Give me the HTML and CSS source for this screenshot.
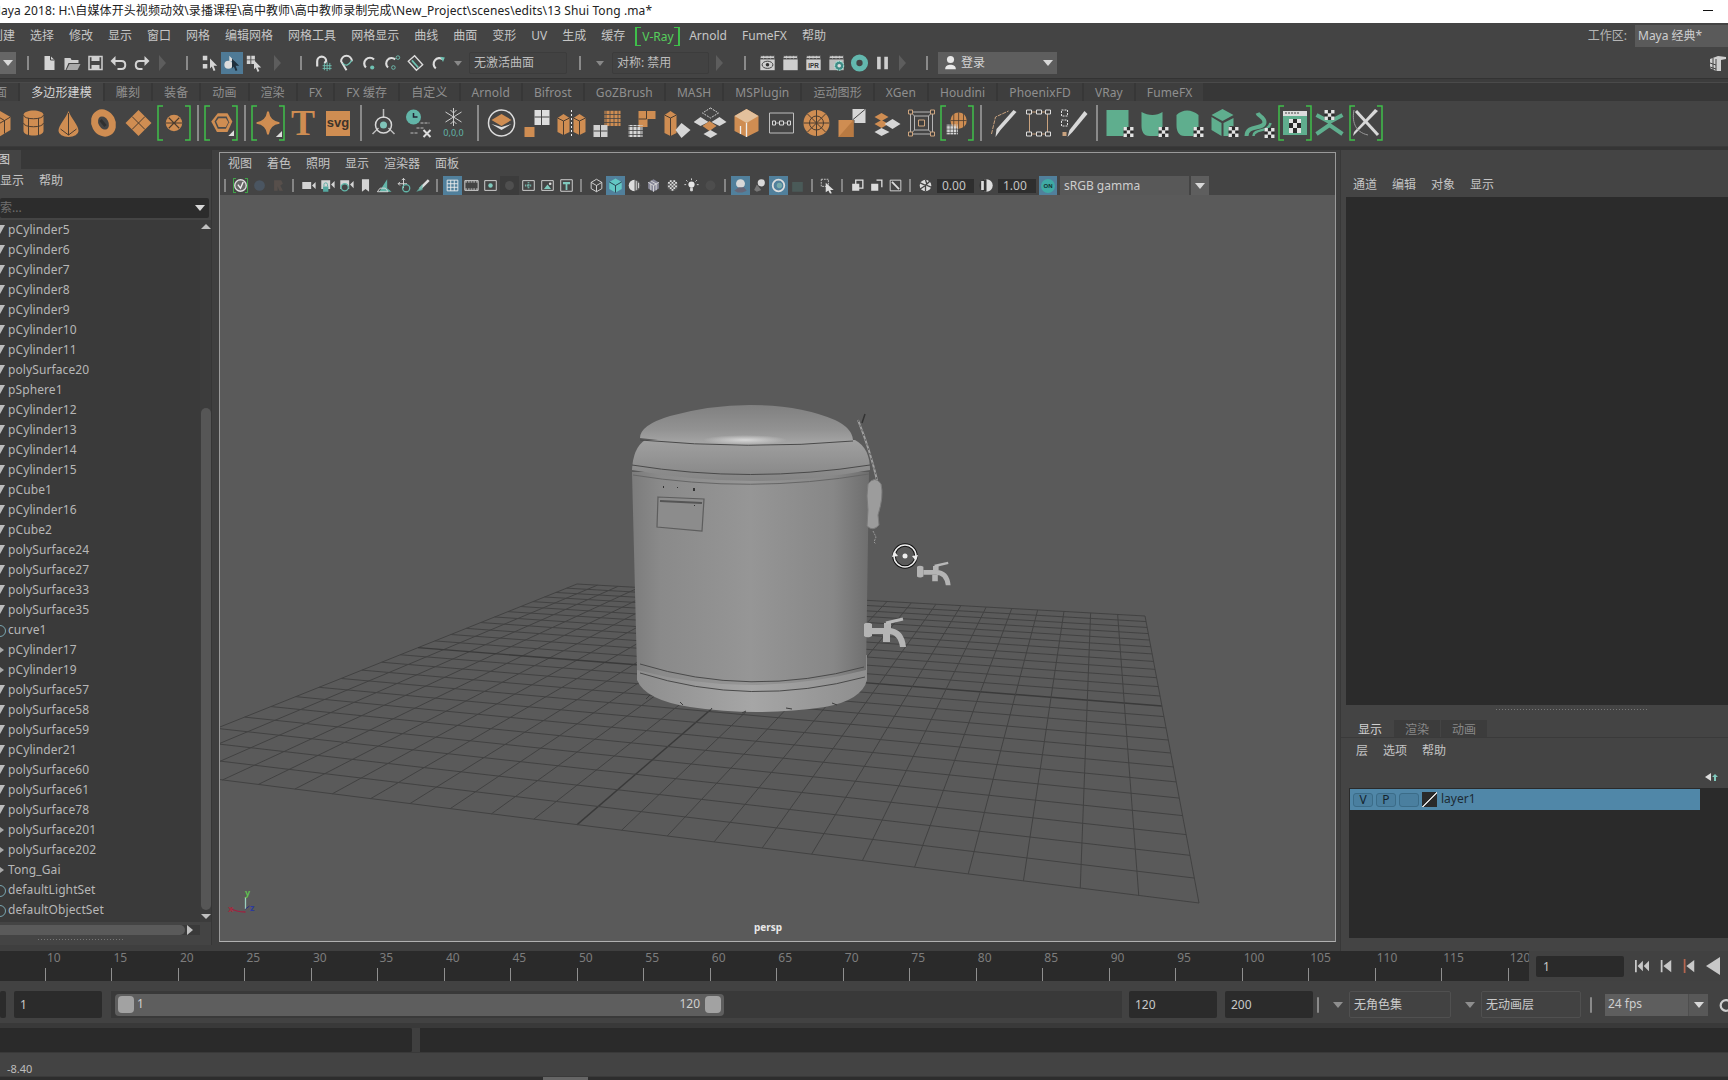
FILE: index.html
```html
<!DOCTYPE html>
<html lang="zh-CN">
<head>
<meta charset="utf-8">
<title>Maya 2018</title>
<link rel="stylesheet" href="styles.css">
</head>
<body>
<svg class="sprite" aria-hidden="true">
<defs>
<g id="br"><path d="M7 1H2v34h5M29 1h5v34h-5" fill="none" stroke="#3fbf4a" stroke-width="1.5"/></g>
<g id="chk"><rect width="10" height="10" fill="#2b2b2b"/><path d="M0 0h3.4v3.4H0zM6.6 0H10v3.4H6.6zM3.3 3.3h3.4v3.4H3.3zM0 6.6h3.4V10H0zM6.6 6.6H10V10H6.6z" fill="#e4e4e4"/></g>
<symbol id="s-cube" viewBox="0 0 32 32"><path d="M16 3l12 7v13l-12 7-12-7V10z" fill="#cf8d52"/><path d="M4 10l12 7 12-7M16 17v13M10 6.500l12 7M10 13.500v13M22 13.500v13" fill="none" stroke="#4a3c30"/></symbol>
<symbol id="s-cyl" viewBox="0 0 32 32"><path d="M6 8c0-6 20-6 20 0v16c0 6-20 6-20 0z" fill="#cf8d52"/><path d="M6 8c0 5 20 5 20 0M6 16c0 5 20 5 20 0M11 11v17M21 11v17" fill="none" stroke="#4a3c30"/></symbol>
<symbol id="s-cone" viewBox="0 0 32 32"><path d="M16 4c3 8 10 14 10 20a10 6 0 0 1-20 0C6 18 13 12 16 4z" fill="#cf8d52"/><path d="M16 6v22M8 22l8 6 8-6" fill="none" stroke="#4a3c30"/></symbol>
<symbol id="s-tor" viewBox="0 0 32 32"><ellipse cx="16" cy="16" rx="8.500" ry="10.500" transform="rotate(-28 16 16)" fill="none" stroke="#cf8d52" stroke-width="7"/><path d="M13 13l5 6" stroke="#2f2f2f" stroke-width="3"/></symbol>
<symbol id="s-plane" viewBox="0 0 32 32"><path d="M16 3l13 13-13 13L3 16z" fill="#cf8d52"/><path d="M9.500 9.500l13 13M22.500 9.500l-13 13" stroke="#4a3c30"/></symbol>
<symbol id="s-ball" viewBox="0 0 32 32"><circle cx="16" cy="16" r="11" fill="#cf8d52"/><path d="M5 16h22M9 9l14 14M23 9L9 23" stroke="#4a3c30" stroke-width="1.500"/></symbol>
<symbol id="s-plat" viewBox="0 0 32 32"><path d="M12 4h12l6 10-6 13H11L4 14z" fill="#cf8d52"/><path d="M12 8h11l3 7-4 8H12l-4-9z" fill="#4b4b4b"/><path d="M13 10h9l3 5-3 6h-9l-3-7z" fill="#cf8d52"/><path d="M32 32V25l-7 7z" fill="#ddd"/></symbol>
<symbol id="s-star" viewBox="0 0 32 32"><path d="M16 3c1 8 5 12 13 13-8 1-12 5-13 13-1-8-5-12-13-13 8-1 12-5 13-13z" fill="#cf8d52" stroke="#cf8d52" stroke-width="2"/><path d="M32 32V25l-7 7z" fill="#ddd"/></symbol>
<symbol id="s-joint" viewBox="0 0 32 32"><path d="M16 2v9M5 27l6-6M27 27l-6-6" stroke="#bbb" stroke-width="1.500"/><circle cx="16" cy="18" r="8" fill="none" stroke="#d8d8d8" stroke-width="1.500"/><circle cx="16" cy="18" r="3.500" fill="#7fc3b8"/></symbol>
<symbol id="s-clock" viewBox="0 0 32 32"><circle cx="11" cy="10" r="7.500" fill="#62b5a8"/><path d="M11 6v4h4" fill="none" stroke="#223" stroke-width="1.500"/><path d="M18 16h9M14 21h8M8 26h8" stroke="#bbb" stroke-dasharray="3 1"/><path d="M21 23l7 7M28 23l-7 7" stroke="#ddd" stroke-width="2"/></symbol>
<symbol id="s-snow" viewBox="0 0 32 32"><path d="M16 1v18M8 5l16 10M24 5L8 15M13 3l3 3 3-3M13 17l3-3 3 3" fill="none" stroke="#ccc"/><text x="16" y="29" text-anchor="middle" class="svgt" fill="#62b5a8">0,0,0</text></symbol>
<symbol id="s-comb" viewBox="0 0 32 32"><circle cx="16" cy="16" r="13" fill="none" stroke="#ddd" stroke-width="1.500"/><path d="M16 7l10 6-10 6-10-6z" fill="#cf8d52"/><path d="M6 17l10 6 10-6-10 3z" fill="#ddd"/></symbol>
<symbol id="s-sep" viewBox="0 0 32 32"><path d="M14 3h15v15H14z" fill="#ddd"/><path d="M21 3v15M14 10h15" stroke="#444"/><path d="M4 20h10v10H4z" fill="#cf8d52"/></symbol>
<symbol id="s-mir" viewBox="0 0 32 32"><path d="M2 11l6-4 6 4v14l-6 3-6-3zM18 11l6-4 6 4v14l-6 3-6-3z" fill="#cf8d52"/><path d="M2 11l6 3 6-3M18 11l6 3 6-3M8 14v14M24 14v14" fill="none" stroke="#4a3c30"/><path d="M16 3v27" stroke="#eee" stroke-dasharray="2 2"/></symbol>
<pattern id="gw" width="4" height="4" patternUnits="userSpaceOnUse"><rect width="3.200" height="3.200" fill="#d6d6d6"/></pattern>
<pattern id="go" width="4" height="4" patternUnits="userSpaceOnUse"><rect width="3.200" height="3.200" fill="#cf8d52"/></pattern>
<symbol id="s-gridA" viewBox="0 0 32 32"><rect x="14" y="3" width="16" height="16" fill="url(#go)"/><rect x="3" y="18" width="14" height="12" fill="#d0d0d0"/><path d="M10 18v12M3 24h14" stroke="#444"/></symbol>
<symbol id="s-gridB" viewBox="0 0 32 32"><path d="M13 4h17v8h-8v8h-9z" fill="#cf8d52"/><path d="M21 4v8M13 12h8" stroke="#4a3c30"/><rect x="3" y="18" width="14" height="12" fill="url(#gw)"/></symbol>
<symbol id="s-ext" viewBox="0 0 32 32"><path d="M4 8l6-4 6 4v18l-6 3-6-3z" fill="#cf8d52"/><path d="M4 8l6 3 6-3M10 11v18" fill="none" stroke="#4a3c30"/><path d="M21 16l9 7-9 8-6-8z" fill="#d6d6d6"/></symbol>
<symbol id="s-stack" viewBox="0 0 32 32"><path d="M15 1l8 5-8 5-8-5z" fill="none" stroke="#ccc" stroke-dasharray="2 1"/><path d="M5 10l8 5-8 4-7-4zM24 10l7 5-7 4-8-4z" fill="#d6d6d6"/><path d="M14 14l7 5-7 5-7-5z" fill="#cf8d52"/><path d="M15 23l7 4-7 4-7-4z" fill="#d6d6d6"/></symbol>
<symbol id="s-bev" viewBox="0 0 32 32"><path d="M16 2l12 7v15l-12 6-12-6V9z" fill="#cf8d52"/><path d="M16 2l12 7-12 7L4 9z" fill="#e2c09c"/><path d="M16 16v14M10 19v8" stroke="#eee" stroke-width="1.300"/></symbol>
<symbol id="s-box" viewBox="0 0 32 32"><path d="M4 6h24v20H4z" fill="none" stroke="#bdbdbd"/><path d="M7 16h18" stroke="#bdbdbd"/><path d="M7 14h3v4H7zM14 14h4v4h-4zM22 14h3v4h-3z" fill="#444" stroke="#d8d8d8"/></symbol>
<symbol id="s-wheel" viewBox="0 0 32 32"><circle cx="16" cy="16" r="13" fill="#cf8d52"/><circle cx="16" cy="16" r="7" fill="none" stroke="#4a3c30"/><path d="M3 16h26M16 3v26M7 7l18 18M25 7L7 25" stroke="#4a3c30"/></symbol>
<symbol id="s-half" viewBox="0 0 32 32"><path d="M3 13h15v17H3z" fill="#cf8d52"/><path d="M3 30L18 13v17z" fill="#b97a42"/><path d="M17 2h13v14H19v-3h-2z" fill="#d6d6d6"/><path d="M17 13L30 2" stroke="#444"/></symbol>
<symbol id="s-dia" viewBox="0 0 32 32"><path d="M11 6l7 4-7 4-7-4zM11 13l7 4-7 4-7-4z" fill="#cf8d52"/><path d="M22 12l8 5-8 5-8-5zM11 21l8 4-8 4-7-4z" fill="#d6d6d6"/></symbol>
<symbol id="s-crn" viewBox="0 0 32 32"><path d="M5 5h22v22H5zM9 9h14v14H9zM5 5l4 4M27 5l-4 4M5 27l4-4M27 27l-4-4" fill="none" stroke="#b5b5b5"/><path d="M3 3h4v4H3zM25 3h4v4h-4zM3 25h4v4H3zM25 25h4v4h-4zM13 13h6v6h-6z" fill="#3d3d3d" stroke="#cfa67f"/></symbol>
<symbol id="s-sg" viewBox="0 0 32 32"><circle cx="18" cy="13" r="10" fill="#cf8d52"/><path d="M8 13h20M18 3v20M12 5v16M24 5v16" stroke="#4a3c30"/><rect x="3" y="18" width="14" height="12" fill="url(#gw)"/></symbol>
<symbol id="s-pen1" viewBox="0 0 32 32"><path d="M4 27L8 10l13-6" fill="none" stroke="#c9a27e" stroke-dasharray="4 1"/><path d="M29 5L13 23l-5 7 1-8L26 3z" fill="#d8d8d8"/></symbol>
<symbol id="s-pen2" viewBox="0 0 32 32"><path d="M7 5h18v22H7z" fill="none" stroke="#c9a27e"/><path d="M4 3h5v4H4zM14 3h5v4h-5zM23 3h5v4h-5zM4 25h5v4H4zM14 25h5v4h-5zM23 25h5v4h-5z" fill="#3e3e3e" stroke="#ddd"/></symbol>
<symbol id="s-pen3" viewBox="0 0 32 32"><path d="M4 3h6v6H4zM4 13h6v6H4z" fill="none" stroke="#ddd" stroke-dasharray="2 1"/><path d="M5 25h4v4H5z" fill="#c9a27e"/><path d="M30 7L15 25l-5 5 2-7L27 4z" fill="#d8d8d8"/></symbol>
<symbol id="s-g1" viewBox="0 0 32 32"><path d="M3 3h22v26H3z" fill="#5fae8e"/><use href="#chk" x="20" y="20" width="10" height="10"/></symbol>
<symbol id="s-g2" viewBox="0 0 32 32"><path d="M3 5c7 4 15 4 21 0v24H11c-6 0-8-5-8-10z" fill="#5fae8e"/><use href="#chk" x="20" y="20"/></symbol>
<symbol id="s-g3" viewBox="0 0 32 32"><path d="M3 8c6-6 15-6 22 0v21H11C5 29 3 24 3 18z" fill="#5fae8e"/><use href="#chk" x="20" y="20"/></symbol>
<symbol id="s-g4" viewBox="0 0 32 32"><path d="M14 2l11 6-11 6L3 8zM3 10l10 6v13L3 23z" fill="#5fae8e"/><path d="M15 16l10-5v8h-4v10h-6z" fill="#5fae8e"/><use href="#chk" x="20" y="20"/></symbol>
<symbol id="s-g5" viewBox="0 0 32 32"><path d="M3 29c0-12 18-6 18-14 0-5-6-6-7-9" fill="none" stroke="#5fae8e" stroke-width="4"/><path d="M10 29c0-8 15-3 17-13" fill="none" stroke="#5fae8e" stroke-width="2.500"/><use href="#chk" x="21" y="21"/></symbol>
<symbol id="s-g6" viewBox="0 0 36 36"><path d="M6 6h24v24H6z" fill="#5fae8e"/><path d="M6 6h24v5H6z" fill="#ddd"/><path d="M8 8h14" stroke="#444" stroke-dasharray="2 1"/><path d="M12 14h12v14H12z" fill="#2b2b2b"/><path d="M12 14h4v4h-4zM20 14h4v4h-4zM16 18h4v5h-4zM12 23h4v5h-4zM20 23h4v5h-4z" fill="#e4e4e4"/></symbol>
<symbol id="s-g7" viewBox="0 0 32 32"><path d="M2 8l13 7 13-7M2 27l13-9 13 9" fill="none" stroke="#5fae8e" stroke-width="4"/><use href="#chk" x="10" y="3"/></symbol>
<symbol id="s-xt" viewBox="0 0 36 36"><path d="M30 6L8 28l-3 3 1-4L27 4z" fill="#d8d8d8"/><path d="M8 6l22 24" stroke="#d8d8d8" stroke-width="3"/><path d="M6 5c-2 10 0 22 14 25" fill="none" stroke="#999"/></symbol>

<symbol id="t-new" viewBox="0 0 18 18"><path d="M4 2h6l4 4v10H4z" fill="#d4d4d4"/><path d="M10 2v4h4" fill="none" stroke="#444"/></symbol>
<symbol id="t-open" viewBox="0 0 18 18"><path d="M1 4h6l1 2h7v3H5l-3 7H1z" fill="#cfcfcf"/><path d="M6 10h11l-3 6H3z" fill="#a9a9a9"/></symbol>
<symbol id="t-save" viewBox="0 0 18 18"><path d="M2.500 2.500h13v13h-13z" fill="none" stroke="#cfcfcf" stroke-width="1.500"/><path d="M5 2h8v5H5zM5 11h8v4H5z" fill="#cfcfcf"/></symbol>
<symbol id="t-undo" viewBox="0 0 18 18"><path d="M5 7h7c5 0 5 8 0 8H8" fill="none" stroke="#d4d4d4" stroke-width="2"/><path d="M6 2v10L1 7z" fill="#d4d4d4"/></symbol>
<symbol id="t-redo" viewBox="0 0 18 18"><path d="M13 7H7c-5 0-5 8 0 8h3" fill="none" stroke="#d4d4d4" stroke-width="2"/><path d="M12 2v10l5-5z" fill="#d4d4d4"/></symbol>
<symbol id="t-s1" viewBox="0 0 20 20"><path d="M2 2h5v5H2zM2 11h5v5H2z" fill="#d4d4d4"/><path d="M10 5l8 8h-4l2 5-2 1-2-5-2 2z" fill="#d4d4d4"/></symbol>
<symbol id="t-s2" viewBox="0 0 20 20"><path d="M7 2l6 6-6 0z" fill="#ddd"/><circle cx="6" cy="12" r="4.500" fill="#ddd"/><path d="M10 5l8 8h-4l2 5-2 1-2-5-2 2z" fill="#1f2f3c"/></symbol>
<symbol id="t-s3" viewBox="0 0 20 20"><path d="M2 2h4v4H2zM7 2h4v4H7zM2 7h4v4H2zM7 7h4v4H7z" fill="#d4d4d4"/><path d="M10 7l8 8h-4l2 4-2 1-2-5-2 2z" fill="#d4d4d4"/></symbol>
<symbol id="t-m1" viewBox="0 0 20 20"><path d="M3 14V8a5 5 0 1 1 10 0l-2 2" fill="none" stroke="#ddd" stroke-width="2.400"/><path d="M9 13h10M14 9v10M11 10v8M17 10v8M9 16h10" stroke="#6fc2b3"/></symbol>
<symbol id="t-m2" viewBox="0 0 20 20"><path d="M10 18L4 8a5.500 5.500 0 1 1 12 0" fill="none" stroke="#ddd" stroke-width="2.200"/><path d="M6 10q4 6 10-3" fill="none" stroke="#6fc2b3" stroke-width="1.500"/></symbol>
<symbol id="t-m3" viewBox="0 0 20 20"><path d="M15 6A6 6 0 1 0 6 15" fill="none" stroke="#ddd" stroke-width="2.400"/><circle cx="13" cy="15" r="2.300" fill="#6fc2b3"/></symbol>
<symbol id="t-m4" viewBox="0 0 20 20"><path d="M13 6A6 6 0 1 0 5 15" fill="none" stroke="#ddd" stroke-width="2.400"/><circle cx="11" cy="15" r="2" fill="none" stroke="#6fc2b3"/><circle cx="16" cy="4" r="2" fill="none" stroke="#6fc2b3"/></symbol>
<symbol id="t-m5" viewBox="0 0 20 20"><path d="M2 8l7-6 9 10-7 6z" fill="none" stroke="#ddd" stroke-width="1.500"/><path d="M6 7l7 8" stroke="#6fc2b3" stroke-width="2"/></symbol>
<symbol id="t-m6" viewBox="0 0 20 20"><path d="M15 6A6 6 0 1 0 7 16" fill="none" stroke="#ddd" stroke-width="2.400"/><path d="M12 3l5 1-2 5z" fill="#6fc2b3"/></symbol>
<symbol id="t-r1" viewBox="0 0 20 20"><path d="M2 2h16v3H2z" fill="#ccc" stroke="#444" stroke-dasharray="3 1"/><path d="M2 6h16v12H2z" fill="#cfcfcf"/><ellipse cx="10" cy="12" rx="6" ry="4" fill="none" stroke="#333"/><circle cx="10" cy="12" r="2" fill="#333"/></symbol>
<symbol id="t-r2" viewBox="0 0 20 20"><path d="M2 2h16v3H2z" fill="#ccc" stroke="#444" stroke-dasharray="3 1"/><path d="M2 6h16v12H2z" fill="#cfcfcf"/></symbol>
<symbol id="t-r3" viewBox="0 0 20 20"><path d="M2 2h16v3H2z" fill="#ccc" stroke="#444" stroke-dasharray="3 1"/><path d="M2 6h16v12H2z" fill="#cfcfcf"/><text x="10" y="16" text-anchor="middle" class="svgs" fill="#333">IPR</text></symbol>
<symbol id="t-r4" viewBox="0 0 20 20"><path d="M2 2h16v3H2z" fill="#ccc" stroke="#444" stroke-dasharray="3 1"/><path d="M2 6h16v12H2z" fill="#bdbdbd"/><circle cx="13" cy="13" r="5" fill="#3f8b86" stroke="#bfe" stroke-dasharray="2 1"/><circle cx="13" cy="13" r="2" fill="#ddd"/></symbol>
<symbol id="t-r5" viewBox="0 0 20 20"><circle cx="10" cy="10" r="6.500" fill="none" stroke="#63b8ae" stroke-width="6"/></symbol>
<symbol id="t-r6" viewBox="0 0 20 20"><path d="M4 3h4v14H4zM12 3h4v14h-4z" fill="#cfcfcf"/></symbol>

<symbol id="v-v" viewBox="0 0 18 18"><path d="M4 1H1v16h3M14 1h3v16h-3" fill="none" stroke="#3fbf4a"/><circle cx="9" cy="9" r="6.500" fill="#666" stroke="#ddd" stroke-width="1.500"/><path d="M6 8l3 4 3-7" fill="none" stroke="#eee" stroke-width="1.600"/></symbol>
<symbol id="v-d1" viewBox="0 0 18 18"><circle cx="9" cy="9" r="6" fill="#4a5561"/></symbol>
<symbol id="v-d2" viewBox="0 0 18 18"><path d="M4 3h8l2 4-3 2 3 6h-4L8 10v5H4z" fill="#574f4b"/></symbol>
<symbol id="v-cam" viewBox="0 0 18 18"><path d="M2 5h10v8H2zM13 9l4-4v8z" fill="#d4d4d4"/></symbol>
<symbol id="v-lk" viewBox="0 0 18 18"><path d="M2 3h10v10H2zM13 8l4-4v8z" fill="#d4d4d4"/><path d="M4 10h6v6H4z" fill="#54a8a0"/><path d="M5 10V8a2 2 0 0 1 4 0v2" fill="none" stroke="#54a8a0"/></symbol>
<symbol id="v-cg" viewBox="0 0 18 18"><path d="M2 3h10v10H2zM13 8l4-4v8z" fill="#d4d4d4"/><circle cx="7" cy="11" r="4" fill="#444" stroke="#62b5a8" stroke-width="1.500"/></symbol>
<symbol id="v-bm" viewBox="0 0 18 18"><path d="M5 2h8v14l-4-3-4 3z" fill="#d4d4d4"/></symbol>
<symbol id="v-pl" viewBox="0 0 18 18"><path d="M3 16l9-14v10l5 4z" fill="#62b5a8"/><path d="M1 16h12l-3-4H4z" fill="none" stroke="#ddd"/></symbol>
<symbol id="v-mv" viewBox="0 0 18 18"><path d="M9 1v11M3 7h10M7 3l2-2 2 2M5 5L3 7l2 2" fill="none" stroke="#ddd"/><circle cx="12" cy="12" r="4" fill="none" stroke="#62b5a8" stroke-width="1.500"/></symbol>
<symbol id="v-pn" viewBox="0 0 18 18"><path d="M15 2l2 2-9 9-3 1 1-3z" fill="#ddd"/><path d="M2 16l7-9v7z" fill="#62b5a8" opacity=".8"/></symbol>
<symbol id="v-grid" viewBox="0 0 18 18"><path d="M3 3h12v12H3zM7 3v12M11 3v12M3 7h12M3 11h12" fill="none" stroke="#eee"/></symbol>
<symbol id="v-film" viewBox="0 0 18 18"><path d="M1.500 3.500h15v11h-15z" fill="none" stroke="#ddd"/><path d="M2 5h14M2 13h14" stroke="#ddd" stroke-dasharray="2 1"/></symbol>
<symbol id="v-res" viewBox="0 0 18 18"><path d="M2.500 3.500h13v11h-13z" fill="none" stroke="#ddd"/><circle cx="9" cy="9" r="2.500" fill="#7fc9bd"/></symbol>
<symbol id="v-dres" viewBox="0 0 18 18"><circle cx="9" cy="9" r="5" fill="#4f4f4f"/></symbol>
<symbol id="v-sft" viewBox="0 0 18 18"><path d="M2.500 3.500h13v11h-13z" fill="none" stroke="#ddd"/><path d="M5 9h8M9 5v8" stroke="#7fc9bd" stroke-dasharray="1 1" stroke-width="2"/></symbol>
<symbol id="v-mnt" viewBox="0 0 18 18"><path d="M2.500 3.500h13v11h-13z" fill="none" stroke="#ddd"/><path d="M5 13l4-5 4 5z" fill="#7fc9bd"/><circle cx="12" cy="7" r="1.500" fill="#ddd"/></symbol>
<symbol id="v-t" viewBox="0 0 18 18"><path d="M2.500 2.500h13v13h-13z" fill="none" stroke="#ddd"/><path d="M5 5h8v2.500h-3V14H8V7.500H5z" fill="#7fc9bd"/></symbol>
<symbol id="v-wire" viewBox="0 0 18 18"><path d="M9 2l6 3.500v7L9 16l-6-3.500v-7zM3 5.500l6 3.500 6-3.500M9 9v7" fill="none" stroke="#ddd"/></symbol>
<symbol id="v-smo" viewBox="0 0 18 18"><path d="M9 1l7 4v8l-7 4-7-4V5z" fill="#63c8c4"/><path d="M2 5l7 4 7-4M9 9v8" fill="none" stroke="#234"/></symbol>
<symbol id="v-half" viewBox="0 0 18 18"><circle cx="9" cy="9" r="6.500" fill="#666"/><path d="M9 2.500a6.500 6.500 0 0 0 0 13z" fill="#ddd"/><path d="M11 4v10M13.500 6v6" stroke="#ddd"/></symbol>
<symbol id="v-cube" viewBox="0 0 18 18"><path d="M9 2l6 3.500v7L9 16l-6-3.500v-7z" fill="#889"/><path d="M3 5.500l6 3.500 6-3.500M9 9v7M6 3.800l6 3.500M6 7.300v7M12 7.300v7" fill="none" stroke="#ddd"/></symbol>
<symbol id="v-chk" viewBox="0 0 18 18"><circle cx="9" cy="9" r="6.500" fill="#555"/><path d="M6 3h2v2H6zM10 3h2v2h-2zM4 5h2v2H4zM8 5h2v2H8zM12 5h2v2h-2zM6 7h2v2H6zM10 7h2v2h-2zM4 9h2v2H4zM8 9h2v2H8zM12 9h2v2h-2zM6 11h2v2H6zM10 11h2v2h-2zM8 13h2v2H8z" fill="#ddd"/></symbol>
<symbol id="v-bulb" viewBox="0 0 18 18"><circle cx="9" cy="8" r="3.500" fill="#e6e6e6"/><path d="M8 12h2v3H8zM9 1v2M3 3l1.500 1.500M15 3l-1.500 1.500M1 8h2M15 8h2" stroke="#ddd" fill="#ddd"/></symbol>
<symbol id="v-dsph" viewBox="0 0 18 18"><circle cx="9" cy="9" r="5.500" fill="#4d4d4d"/></symbol>
<symbol id="v-shd" viewBox="0 0 18 18"><circle cx="9" cy="7" r="5" fill="#d8d8d8"/><path d="M2 15l5-4h6l3 4-5 2H6z" fill="#667"/></symbol>
<symbol id="v-shd2" viewBox="0 0 18 18"><circle cx="11" cy="6" r="4" fill="#d8d8d8"/><path d="M3 14l3-6 5 6-5 2z" fill="#777"/></symbol>
<symbol id="v-ao" viewBox="0 0 18 18"><circle cx="9" cy="9" r="6.500" fill="none" stroke="#ddd" stroke-width="2"/><circle cx="10" cy="9" r="3" fill="#7aa"/></symbol>
<symbol id="v-dark" viewBox="0 0 18 18"><path d="M3 5h12v11H3z" fill="#4a5a58"/></symbol>
<symbol id="v-sl" viewBox="0 0 18 18"><path d="M2 2h8v8H2z" fill="none" stroke="#ccc" stroke-dasharray="2 1"/><path d="M7 6l9 8h-4l2 4-2 .5-2-4-3 2z" fill="#ddd"/></symbol>
<symbol id="v-sq1" viewBox="0 0 18 18"><path d="M7 3h8v9H7z" fill="none" stroke="#ddd" stroke-width="1.500"/><path d="M3 7h8v8H3z" fill="#ddd"/></symbol>
<symbol id="v-sq2" viewBox="0 0 18 18"><path d="M9 3h6v8" fill="none" stroke="#ddd" stroke-width="1.500"/><path d="M3 7h8v8H3z" fill="#ddd"/></symbol>
<symbol id="v-sq3" viewBox="0 0 18 18"><path d="M3 3h12v12H3z" fill="#444" stroke="#ddd"/><path d="M5 5l8 8" stroke="#ddd" stroke-width="2"/></symbol>
<symbol id="v-ap" viewBox="0 0 18 18"><circle cx="9" cy="9" r="6.500" fill="#ddd"/><path d="M9 2.500L11 9l5 2M3 6l6 3 0 6.500M3 13l6-4 5-5" fill="none" stroke="#444" stroke-width="1.500"/></symbol>
<symbol id="v-gm" viewBox="0 0 18 18"><circle cx="9" cy="9" r="7" fill="#ddd"/><path d="M9 2h-1a7 7 0 0 0 0 14h1z" fill="#333"/><path d="M3 4h3v10H3z" fill="#ddd"/></symbol>
</defs>
</svg>

<div class="app">
  <header class="titlebar"><span class="title">Maya 2018: H:\自媒体开头视频动效\录播课程\高中教师\高中教师录制完成\New_Project\scenes\edits\13 Shui Tong .ma*</span><i class="minimize"></i></header>

  <nav class="menubar">
    <span class="first">创建</span><span>选择</span><span>修改</span><span>显示</span><span>窗口</span><span>网格</span><span>编辑网格</span><span>网格工具</span><span>网格显示</span><span>曲线</span><span>曲面</span><span>变形</span><span>UV</span><span>生成</span><span>缓存</span><span class="vray">V-Ray</span><span>Arnold</span><span>FumeFX</span><span>帮助</span>
    <div class="workspace"><label>工作区:</label><div class="ws-field">Maya 经典*</div></div>
  </nav>

  <div class="toolbar">
    <div class="mode"><b class="arrow"></b></div>
    <i class="dv m10"></i>
    <svg class="ti m9"><use href="#t-new"/></svg><svg class="ti"><use href="#t-open"/></svg><svg class="ti"><use href="#t-save"/></svg><svg class="ti"><use href="#t-undo"/></svg><svg class="ti"><use href="#t-redo"/></svg>
    <b class="fold m6"></b>
    <i class="dv m18"></i>
    <svg class="ti w22 m11"><use href="#t-s1"/></svg><svg class="ti w22 on"><use href="#t-s2"/></svg><svg class="ti w22"><use href="#t-s3"/></svg>
    <b class="fold m9"></b>
    <i class="dv m17"></i>
    <svg class="ti m10"><use href="#t-m1"/></svg><svg class="ti"><use href="#t-m2"/></svg><svg class="ti"><use href="#t-m3"/></svg><svg class="ti"><use href="#t-m4"/></svg><svg class="ti"><use href="#t-m5"/></svg><svg class="ti"><use href="#t-m6"/></svg>
    <b class="mini m4"></b>
    <div class="tfield w98 m7">无激活曲面</div>
    <i class="dv m11"></i>
    <b class="mini m15"></b>
    <div class="tfield w97 m8">对称: 禁用</div>
    <b class="fold m7"></b>
    <i class="dv m19"></i>
    <svg class="ti m10"><use href="#t-r1"/></svg><svg class="ti"><use href="#t-r2"/></svg><svg class="ti"><use href="#t-r3"/></svg><svg class="ti"><use href="#t-r4"/></svg><svg class="ti"><use href="#t-r5"/></svg><svg class="ti"><use href="#t-r6"/></svg>
    <b class="fold m5"></b>
    <i class="dv m18"></i>
    <div class="login m10"><svg class="user" viewBox="0 0 16 18"><circle cx="8" cy="5" r="4" fill="#e8e8e8"/><path d="M2 16c0-4 3-5 6-5s6 1 6 5z" fill="#e8e8e8"/></svg><span>登录</span><b class="arrow"></b></div>
    <svg class="sidebar-ic" viewBox="0 0 20 20"><path d="M2 6l8-3 8 1v2l-5 1v11H8l-6-3z" fill="#cfcfcf"/><path d="M2 10l6 2M2 14l6 2M5 5v12M8 6v12" stroke="#444"/></svg>
  </div>

  <div class="rule"></div>

  <div class="shelftabs">
    <span class="first">曲面</span><span class="active">多边形建模</span><span>雕刻</span><span>装备</span><span>动画</span><span>渲染</span><span>FX</span><span>FX 缓存</span><span>自定义</span><span>Arnold</span><span>Bifrost</span><span>GoZBrush</span><span>MASH</span><span>MSPlugin</span><span>运动图形</span><span>XGen</span><span>Houdini</span><span>PhoenixFD</span><span>VRay</span><span>FumeFX</span>
  </div>

  <div class="shelf">
    <svg class="si start"><use href="#s-cube"/></svg><svg class="si"><use href="#s-cyl"/></svg><svg class="si"><use href="#s-cone"/></svg><svg class="si"><use href="#s-tor"/></svg><svg class="si"><use href="#s-plane"/></svg>
    <svg class="bi" viewBox="0 0 36 36"><use href="#br"/><use href="#s-ball" x="6" y="6" width="24" height="24"/></svg>
    <i class="sd w11"></i>
    <svg class="bi" viewBox="0 0 36 36"><use href="#br"/><use href="#s-plat" x="5" y="5" width="26" height="26"/></svg>
    <i class="sd w11"></i>
    <svg class="bi" viewBox="0 0 36 36"><use href="#br"/><use href="#s-star" x="4" y="4" width="28" height="28"/></svg>
    <svg class="si" viewBox="0 0 35 32"><text x="17" y="28" text-anchor="middle" class="big-t">T</text></svg>
    <svg class="si" viewBox="0 0 35 32"><rect x="5" y="4" width="24" height="25" fill="#cf8d52"/><text x="17" y="20" text-anchor="middle" class="svg-t">svg</text></svg>
    <i class="sd w10"></i>
    <svg class="si"><use href="#s-joint"/></svg><svg class="si"><use href="#s-clock"/></svg><svg class="si"><use href="#s-snow"/></svg>
    <i class="sd w13"></i>
    <svg class="si"><use href="#s-comb"/></svg><svg class="si"><use href="#s-sep"/></svg><svg class="si"><use href="#s-mir"/></svg><svg class="si"><use href="#s-gridA"/></svg><svg class="si"><use href="#s-gridB"/></svg><svg class="si"><use href="#s-ext"/></svg><svg class="si"><use href="#s-stack"/></svg><svg class="si"><use href="#s-bev"/></svg><svg class="si"><use href="#s-box"/></svg><svg class="si"><use href="#s-wheel"/></svg><svg class="si"><use href="#s-half"/></svg><svg class="si"><use href="#s-dia"/></svg><svg class="si"><use href="#s-crn"/></svg>
    <svg class="bi" viewBox="0 0 36 36"><use href="#br"/><use href="#s-sg" x="5" y="5" width="26" height="26"/></svg>
    <i class="sd w11"></i>
    <svg class="si"><use href="#s-pen1"/></svg><svg class="si"><use href="#s-pen2"/></svg><svg class="si"><use href="#s-pen3"/></svg>
    <i class="sd w11"></i>
    <svg class="si"><use href="#s-g1"/></svg><svg class="si"><use href="#s-g2"/></svg><svg class="si"><use href="#s-g3"/></svg><svg class="si"><use href="#s-g4"/></svg><svg class="si"><use href="#s-g5"/></svg>
    <svg class="bi" viewBox="0 0 36 36"><use href="#br"/><use href="#s-g6"/></svg>
    <svg class="si"><use href="#s-g7"/></svg>
    <svg class="bi" viewBox="0 0 36 36"><use href="#br"/><use href="#s-xt"/></svg>
  </div>

  <main class="workarea">
    <aside class="outliner">
      <div class="ol-tabs"><span>大纲视图</span></div>
      <div class="ol-menu"><span>显示</span><span>帮助</span></div>
      <div class="ol-search"><span>搜索...</span><b class="arrow"></b></div>
      <div class="ol-body">
        <ul class="ol-list">
          <li><i class="tri"></i>pCylinder5</li><li><i class="tri"></i>pCylinder6</li><li><i class="tri"></i>pCylinder7</li><li><i class="tri"></i>pCylinder8</li><li><i class="tri"></i>pCylinder9</li><li><i class="tri"></i>pCylinder10</li><li><i class="tri"></i>pCylinder11</li><li><i class="tri"></i>polySurface20</li><li><i class="tri"></i>pSphere1</li><li><i class="tri"></i>pCylinder12</li><li><i class="tri"></i>pCylinder13</li><li><i class="tri"></i>pCylinder14</li><li><i class="tri"></i>pCylinder15</li><li><i class="tri"></i>pCube1</li><li><i class="tri"></i>pCylinder16</li><li><i class="tri"></i>pCube2</li><li><i class="tri"></i>polySurface24</li><li><i class="tri"></i>polySurface27</li><li><i class="tri"></i>polySurface33</li><li><i class="tri"></i>polySurface35</li><li><i class="ring"></i>curve1</li><li><i class="dot"></i>pCylinder17</li><li><i class="dot"></i>pCylinder19</li><li><i class="tri"></i>polySurface57</li><li><i class="tri"></i>polySurface58</li><li><i class="tri"></i>polySurface59</li><li><i class="tri"></i>pCylinder21</li><li><i class="tri"></i>polySurface60</li><li><i class="tri"></i>polySurface61</li><li><i class="tri"></i>polySurface78</li><li><i class="dot"></i>polySurface201</li><li><i class="dot"></i>polySurface202</li><li><i class="dot"></i>Tong_Gai</li><li><i class="ring"></i>defaultLightSet</li><li><i class="ring"></i>defaultObjectSet</li>
        </ul>
        <div class="vscroll"><b class="up"></b><div class="thumb"></div><b class="down"></b></div>
      </div>
      <div class="hscroll"><div class="hthumb"></div><b class="right"></b></div>
      <div class="grip ol-grip"></div>
    </aside>

    <section class="viewport">
      <div class="vp-menu"><span>视图</span><span>着色</span><span>照明</span><span>显示</span><span>渲染器</span><span>面板</span></div>
      <div class="vp-tools">
        <i class="vd m3"></i>
        <svg class="vi m5"><use href="#v-v"/></svg><svg class="vi"><use href="#v-d1"/></svg><svg class="vi"><use href="#v-d2"/></svg>
        <i class="vd m3"></i>
        <svg class="vi m5"><use href="#v-cam"/></svg><svg class="vi"><use href="#v-lk"/></svg><svg class="vi"><use href="#v-cg"/></svg><svg class="vi"><use href="#v-bm"/></svg><svg class="vi"><use href="#v-pl"/></svg><svg class="vi"><use href="#v-mv"/></svg><svg class="vi"><use href="#v-pn"/></svg>
        <i class="vd m3"></i>
        <svg class="vi m5 on"><use href="#v-grid"/></svg><svg class="vi"><use href="#v-film"/></svg><svg class="vi"><use href="#v-res"/></svg><svg class="vi dimbox"><use href="#v-dres"/></svg><svg class="vi"><use href="#v-sft"/></svg><svg class="vi"><use href="#v-mnt"/></svg><svg class="vi"><use href="#v-t"/></svg>
        <i class="vd m3"></i>
        <svg class="vi m5"><use href="#v-wire"/></svg><svg class="vi on"><use href="#v-smo"/></svg><svg class="vi"><use href="#v-half"/></svg><svg class="vi"><use href="#v-cube"/></svg><svg class="vi"><use href="#v-chk"/></svg><svg class="vi"><use href="#v-bulb"/></svg><svg class="vi"><use href="#v-dsph"/></svg>
        <i class="vd m3"></i>
        <svg class="vi m5 on"><use href="#v-shd"/></svg><svg class="vi"><use href="#v-shd2"/></svg><svg class="vi on"><use href="#v-ao"/></svg><svg class="vi"><use href="#v-dark"/></svg>
        <i class="vd m3"></i>
        <svg class="vi m5"><use href="#v-sl"/></svg>
        <i class="vd m3"></i>
        <svg class="vi m5"><use href="#v-sq1"/></svg><svg class="vi"><use href="#v-sq2"/></svg><svg class="vi"><use href="#v-sq3"/></svg>
        <i class="vd m3"></i>
        <svg class="vi m5"><use href="#v-ap"/></svg>
        <div class="vnum m2">0.00</div>
        <svg class="vi m3"><use href="#v-gm"/></svg>
        <div class="vnum w38 m2">1.00</div>
        <div class="onbtn m3"><span>ON</span></div>
        <div class="cspace m3">sRGB gamma</div>
        <div class="csarrow m2"><b class="arrow"></b></div>
      </div>
      <svg class="scene" viewBox="220 195 1115 746" preserveAspectRatio="none">
        <defs>
          <linearGradient id="bodyG" x1="0" x2="1" y1="0" y2="0"><stop offset="0" stop-color="#7c7c7c"/><stop offset=".12" stop-color="#8a8a8a"/><stop offset=".5" stop-color="#969696"/><stop offset=".85" stop-color="#878787"/><stop offset="1" stop-color="#6e6e6e"/></linearGradient>
          <linearGradient id="baseG" x1="0" x2="1" y1="0" y2="0"><stop offset="0" stop-color="#8e8e8e"/><stop offset=".5" stop-color="#a6a6a6"/><stop offset="1" stop-color="#8e8e8e"/></linearGradient>
          <linearGradient id="shG" x1="0" x2="0" y1="0" y2="1"><stop offset="0" stop-color="#a0a0a0"/><stop offset="1" stop-color="#858585"/></linearGradient>
          <linearGradient id="lidG" x1="0" x2="0" y1="0" y2="1"><stop offset="0" stop-color="#808080"/><stop offset=".6" stop-color="#929292"/><stop offset="1" stop-color="#a8a8a8"/></linearGradient>
          <radialGradient id="hl"><stop offset="0" stop-color="#d8d8d8"/><stop offset="1" stop-color="#d8d8d8" stop-opacity="0"/></radialGradient>
          <g id="faucet"><path class="fc" d="M0 1q2-2 6-1l2 1v12l-2 1q-4 1-6-1z"/><path class="fc" d="M8 5H24Q40 5 42 24H36Q34 11 24 11H8Z"/><path class="fc" d="M20 0h7v6h-7zM19 11h7v8h-7z"/><path class="fa" d="M22 0L39-4"/></g>
        </defs>
        <g id="grid"></g>
        <path class="tk-base" d="M637 655V680Q645 700 690 707Q757 717 825 707Q862 700 867 680V655Z"/>
        <path class="tk-body" d="M632 472L637 670Q750 700 866 670L869 472Z"/>
        <path class="tk-line" d="M640 664Q750 698 864 667"/>
        <path class="tk-line" d="M640 673Q750 708 865 677"/>
        <path class="tk-tick" d="M650 695l-4 4M712 708l-3 4M746 711l-4 2M786 708l6 1M832 703l5 2M680 702l3 3"/>
        <path class="tk-should" d="M632 470Q633 448 645 440H855Q870 448 870 470Q755 492 632 470Z"/>
        <path class="tk-line" d="M632 465Q750 484 870 465"/>
        <path class="tk-line2" d="M633 475Q750 494 869 474"/>
        <path class="tk-lid" d="M640 438Q640 425 670 416Q710 405 750 405Q800 405 835 420Q852 428 853 440Q750 452 640 438Z"/>
        <path class="tk-line" d="M640 440Q750 450 853 441"/>
        <ellipse cx="745" cy="440" rx="42" ry="5" fill="url(#hl)"/>
        <path class="tk-panel" d="M658 497L704 499L702 531L657 527Z"/>
        <path class="tk-panel2" d="M660 501L702 503"/>
        <path class="tk-dots" d="M663 486h1v2h-1zM677 487h1v1h-1zM693 488h2v3h-2zM694 505h1v1h-1z"/>
        <path class="tk-hose" d="M858 420Q870 450 877 480"/>
        <path class="tk-hoseb" d="M858 420Q870 450 877 480"/>
        <path class="tk-hook" d="M862 423L865 414"/>
        <path class="tk-bulb" d="M868 484Q875 475 881 484Q884 496 878 515L879 525Q873 532 867 526L868 510Q866 495 868 484Z"/>
        <path class="tk-chain" d="M873 531l3 6-2 5 2 2"/>
        <use href="#faucet" transform="translate(864 623)"/>
        <use href="#faucet" transform="translate(917 566) scale(.8)"/>
        <g class="cursor"><circle cx="905" cy="556" r="11" class="cur-b"/><circle cx="905" cy="556" r="11" class="cur-w"/><circle cx="905" cy="556" r="2.500" fill="#eee"/><path d="M894 551l4 5-6 1zM916 561l-4-5 6-1z" fill="#eee"/></g>
        <path class="ax-y" d="M245.500 909V897"/><path class="ax-z" d="M245.500 909l4-3"/><path class="ax-x" d="M245.500 912Q236 912 230 908"/>
        <text x="245" y="896" class="ax t-y">y</text><text x="250" y="911" class="ax t-z">z</text><text x="228" y="912" class="ax t-x">x</text>
        <text x="768" y="931" text-anchor="middle" class="persp">persp</text>
      </svg>
    </section>

    <aside class="rightcol">
      <div class="cb-menu"><span>通道</span><span>编辑</span><span>对象</span><span>显示</span></div>
      <div class="cb-body"></div>
      <div class="grip cb-grip"></div>
      <div class="lay-tabs"><span class="active">显示</span><span>渲染</span><span>动画</span></div>
      <div class="lay-menu"><span>层</span><span>选项</span><span>帮助</span></div>
      <div class="lay-tools"><svg class="lay-ic" viewBox="0 0 16 10"><path d="M1 5l6-4v8z" fill="#ddd"/><path d="M11 2l3 3h-2v4h-2V5H8z" fill="#7fc9bd"/></svg></div>
      <div class="lay-body">
        <div class="layer"><span class="lbtn">V</span><span class="lbtn">P</span><span class="lbtn"></span><i class="swatch"></i><span class="lname">layer1</span></div>
      </div>
    </aside>
  </main>

  <div class="timeline">
    <div class="ruler">
      <div class="tk"><span>10</span><i></i></div><div class="tk"><span>15</span><i></i></div><div class="tk"><span>20</span><i></i></div><div class="tk"><span>25</span><i></i></div><div class="tk"><span>30</span><i></i></div><div class="tk"><span>35</span><i></i></div><div class="tk"><span>40</span><i></i></div><div class="tk"><span>45</span><i></i></div><div class="tk"><span>50</span><i></i></div><div class="tk"><span>55</span><i></i></div><div class="tk"><span>60</span><i></i></div><div class="tk"><span>65</span><i></i></div><div class="tk"><span>70</span><i></i></div><div class="tk"><span>75</span><i></i></div><div class="tk"><span>80</span><i></i></div><div class="tk"><span>85</span><i></i></div><div class="tk"><span>90</span><i></i></div><div class="tk"><span>95</span><i></i></div><div class="tk"><span>100</span><i></i></div><div class="tk"><span>105</span><i></i></div><div class="tk"><span>110</span><i></i></div><div class="tk"><span>115</span><i></i></div><div class="tk"><span>120</span><i></i></div>
    </div>
    <div class="curframe">1</div>
    <svg class="pb first-pb" viewBox="0 0 18 16"><path d="M1 1h2v14H1zM10 2v12L4 8zM17 2v12l-6-6z" fill="#c8c8c8"/></svg>
    <svg class="pb" viewBox="0 0 14 16"><path d="M1 1h2v14H1zM13 1v14L4 8z" fill="#c8c8c8"/></svg>
    <svg class="pb" viewBox="0 0 14 16"><path d="M1 0h2v16H1z" fill="#b5654f"/><path d="M13 1v14L4 8z" fill="#c8c8c8"/></svg>
    <svg class="pb play" viewBox="0 0 16 18"><path d="M15 0v18L1 9z" fill="#c8c8c8"/></svg>
  </div>

  <div class="rangebar">
    <div class="rf edge"></div>
    <div class="rf w88 m8">1</div>
    <div class="strip">
      <div class="slider"><i class="handle"></i><span>1</span><span class="end">120</span><i class="handle"></i></div>
    </div>
    <div class="rf w88 m7">120</div>
    <div class="rf w88 m8">200</div>
    <i class="rd"></i>
    <b class="ot"></b>
    <div class="set w102">无角色集</div>
    <b class="ot"></b>
    <div class="set w100">无动画层</div>
    <i class="rd m9"></i>
    <div class="fps"><span>24 fps</span><div class="fps-a"><b class="arrow"></b></div></div>
    <svg class="loop" viewBox="0 0 18 18"><path d="M15 6A6 6 0 1 0 15 13" fill="none" stroke="#ccc" stroke-width="2.500"/></svg>
  </div>

  <div class="cmdline"><div class="cmd-l"></div><div class="cmd-h"></div><div class="cmd-r"></div></div>
  <div class="status"><span>-8.40</span></div>
  <div class="taskstrip"><i></i></div>
</div>
<script src="app.js"></script>
</body>
</html>
```
FILE: styles.css
```css
*{box-sizing:border-box}
html,body{margin:0;height:100%;overflow:hidden}
body{font:12px/1.2 "Noto Sans","Noto Sans CJK SC",sans-serif;color:#c4c4c4;background:#444}
i,b{display:block;font-style:normal;flex:none}
ul{list-style:none;margin:0;padding:0}
.sprite{position:absolute;width:0;height:0}
.app{display:flex;flex-direction:column;width:1728px;height:1080px;overflow:hidden}

.m2{margin-left:2px}.m3{margin-left:3px}.m4{margin-left:4px}.m5{margin-left:5px}.m6{margin-left:6px}.m7{margin-left:7px}.m8{margin-left:8px}.m9{margin-left:9px}.m10{margin-left:10px}.m11{margin-left:11px}.m15{margin-left:15px}.m17{margin-left:17px}.m18{margin-left:18px}.m19{margin-left:19px}

.titlebar{flex:none;height:23px;background:#fff;color:#222;display:flex;align-items:center;white-space:nowrap;position:relative;letter-spacing:.1px}
.title{margin-left:-10px}
.minimize{position:absolute;left:1703px;top:10px;width:10px;height:1px;background:#111}

.menubar{flex:none;height:25px;background:#444;display:flex;align-items:center;gap:15px;white-space:nowrap;color:#c6c6c6;padding-top:1px}
.menubar .first{margin-left:-9px}
.vray{position:relative;color:#56cf5c;padding:0 7px;margin:0 -6px 0 -5px;height:19px;line-height:19px;width:45px}
.vray::before,.vray::after{content:"";position:absolute;top:0;bottom:0;width:4px;border:solid #3fbf4a;border-width:1px 0 1px 2px}
.vray::before{left:0}
.vray::after{right:0;border-width:1px 2px 1px 0}
.workspace{margin-left:auto;display:flex;align-items:center;gap:8px}
.workspace label{color:#b5b5b5}
.ws-field{width:93px;height:22px;background:#5a5a5a;padding-left:3px;line-height:22px;color:#cfcfcf}

.toolbar{flex:none;height:30px;background:#444;display:flex;align-items:center;position:relative}
.mode{width:16px;height:22px;background:#666;display:flex;align-items:center;justify-content:center}
.arrow{width:0;height:0;border:5px solid transparent;border-top:6px solid #d8d8d8;border-bottom:0}
.dv{width:3px;height:20px;border-left:1px solid #444;background:linear-gradient(#444 0 15%,#8a8a8a 15% 85%,#444 85%)}
.fold{width:8px;height:0;border:solid transparent;border-width:8px 0 8px 7px;border-left-color:#5d5d5d}
.mini{width:8px;height:0;border:4px solid transparent;border-top:5px solid #888;border-bottom:0}
.ti{flex:none;width:23px;height:22px;padding:2px 0}
.w22{width:22px}
.ti.on{background:#4f7a96}
.tfield{flex:none;height:22px;line-height:20px;padding-left:4px;border:1px solid #3c3c3c;background:#424242;border-radius:2px;color:#bcbcbc;white-space:nowrap}
.w98{width:98px}.w97{width:97px}
.login{flex:none;width:119px;height:22px;background:#5e5e5e;display:flex;align-items:center;padding-left:5px;gap:3px;color:#d5d5d5}
.login .arrow{margin-left:auto;margin-right:4px}
.user{width:15px;height:16px}
.sidebar-ic{width:20px;height:20px;margin-left:auto;margin-right:0}

.rule{flex:none;height:5px;background:#3c3c3c;border-top:1px solid #333;border-bottom:1px solid #4a4a4a}
.shelftabs{flex:none;height:18px;background:#373737;display:flex;gap:2px;white-space:nowrap;color:#8f8f8f;overflow:hidden;letter-spacing:.11px}
.shelftabs span{padding:1px 11px 0;line-height:18px;background:#3e3e3e;flex:none}
.shelftabs .first{margin-left:-28px}
.shelftabs .active{background:#444;color:#d4d4d4}
.shelf{flex:none;height:46px;background:#444;display:flex;align-items:center;border-bottom:1px solid #3a3a3a;padding-bottom:2px}
.si{flex:none;width:35px;height:32px}
.si.start{margin-left:-19px}
.bi{flex:none;width:36px;height:36px}
.sd{flex:none;height:36px;position:relative}
.sd::after{content:"";position:absolute;left:50%;top:0;bottom:0;width:2px;margin-left:-1px;background:#8a8a8a}
.w10{width:10px}.w11{width:11px}.w13{width:13px}
.big-t{font:bold 36px "Liberation Serif",serif;fill:#cf8d52}
.svg-t{font:bold 13px "Liberation Sans",sans-serif;fill:#3d342b}
.svgt{font:9px "Noto Sans",sans-serif}
.svgs{font:bold 7px "Liberation Sans",sans-serif}

.workarea{flex:none;height:804px;display:flex;background:#3f3f3f;border-top:3px solid #353535}
.outliner{flex:none;width:212px;display:flex;flex-direction:column;background:#444;border-right:1px solid #363636;height:795px}
.ol-tabs{flex:none;height:19px;background:#383838;overflow:hidden;white-space:nowrap}
.ol-tabs span{display:block;width:59px;margin-left:-38px;height:19px;background:#444;line-height:19px;color:#d4d4d4}
.ol-menu{flex:none;height:27px;padding-bottom:2px;display:flex;align-items:center;gap:15px}
.ol-search{flex:none;height:20px;width:209px;background:#2c2c2c;display:flex;align-items:center;color:#6f6f6f;border-radius:2px;margin-top:2px}
.ol-search span{margin-left:-12px}
.ol-search .arrow{margin-left:auto;margin-right:4px}
.ol-body{flex:none;height:702px;display:flex;background:#3a3a3a;margin-top:2px}
.ol-list{flex:none;width:200px;color:#b7b7b7;letter-spacing:.1px}
.ol-list li{height:20px;display:flex;align-items:center;white-space:nowrap;overflow:hidden}
.tri,.dot,.ring{width:8px;height:12px;position:relative}
.tri::before{content:"";position:absolute;left:-5px;top:1px;border:5.500px solid transparent;border-top:9px solid #bdbdbd;border-bottom:0}
.dot::before{content:"";position:absolute;left:0;top:3px;border:solid transparent;border-width:3px 0 3px 4px;border-left-color:#a8a8a8}
.ring::before{content:"";position:absolute;left:-6px;top:1px;width:10px;height:10px;border:1.500px solid #7aa6b0;border-radius:50%}
.vscroll{flex:none;width:11px;display:flex;flex-direction:column;align-items:center;background:#3c3c3c;position:relative}
.up{width:0;height:0;border:5px solid transparent;border-bottom:5px solid #c0c0c0;border-top:0;margin-top:4px}
.thumb{width:10px;height:502px;margin-top:179px;background:#565656;border-radius:5px}
.down{width:0;height:0;border:5px solid transparent;border-top:5px solid #c0c0c0;border-bottom:0;margin-top:4px}
.hscroll{flex:none;height:10px;margin-top:3px;display:flex;align-items:center;width:200px;background:#3a3a3a}
.hthumb{width:185px;height:10px;background:#5a5a5a;border-radius:0 5px 5px 0}
.right{width:0;height:0;margin-left:2px;border:solid transparent;border-width:5px 0 5px 6px;border-left-color:#c0c0c0}
.grip{flex:none;height:1px;background-image:linear-gradient(90deg,#777 50%,transparent 50%);background-size:3px 1px}
.ol-grip{width:87px;margin:4px 0 0 38px}

.viewport{flex:none;width:1117px;height:790px;margin:2px 0 0 7px;display:flex;flex-direction:column;border:1px solid #9a9a9a;border-bottom-color:#b0b0b0;background:#444}
.vp-menu{flex:none;height:23px;display:flex;align-items:center;gap:15px;padding-left:8px;white-space:nowrap}
.vp-tools{flex:none;height:19px;display:flex;align-items:center}
.vd{width:3px;height:17px;border-left:1px solid #444;background:linear-gradient(#444 0 10%,#858585 10% 90%,#444 90%)}
.vi{flex:none;width:19px;height:19px;padding:1.500px}
.vi.on{background:#51809c}
.vi.dimbox{background:#3c3c3c}
.vnum{flex:none;width:37px;height:14px;line-height:14px;background:#2e2e2e;color:#c4c4c4;padding-left:5px}
.w38{width:38px}
.onbtn{flex:none;width:18px;height:19px;background:#51809c;display:flex;align-items:center;justify-content:center}
.onbtn span{width:14px;height:14px;border-radius:50%;background:#3faaa4;color:#12302f;font:bold 6px/14px "Liberation Sans",sans-serif;text-align:center}
.cspace{flex:none;width:129px;height:19px;line-height:19px;background:#585858;padding-left:4px;white-space:nowrap;color:#cdcdcd}
.csarrow{flex:none;width:18px;height:19px;background:#5e5e5e;display:flex;align-items:center;justify-content:center}
.scene{flex:1 1 auto;width:100%;min-height:0;background:#5a5a5a;display:block}
.gl{stroke:#424242;stroke-width:1}
.gm{stroke:#3a3a3a;stroke-width:1.400}
.tk-base{fill:url(#baseG)}
.tk-body{fill:url(#bodyG)}
.tk-should{fill:url(#shG)}
.tk-lid{fill:url(#lidG)}
.tk-line{fill:none;stroke:#4a4a4a;stroke-width:1}
.tk-line2{fill:none;stroke:#666;stroke-width:1}
.tk-tick{fill:none;stroke:#3d3d3d;stroke-width:1}
.tk-panel{fill:#8c8c8c;stroke:#5d5d5d;stroke-width:1.200}
.tk-panel2{fill:none;stroke:#555;stroke-width:2}
.tk-dots{fill:#333}
.tk-hose{fill:none;stroke:#a0a0a0;stroke-width:2}
.tk-hoseb{fill:none;stroke:#555;stroke-width:1;stroke-dasharray:2 3}
.tk-hook{stroke:#333;stroke-width:1.500}
.tk-bulb{fill:#9c9c9c;stroke:#7c7c7c}
.tk-chain{fill:none;stroke:#999;stroke-dasharray:2 1}
.fc{fill:#b4b4b4}
.fa{fill:none;stroke:#b8b8b8;stroke-width:3}
.cur-b{fill:none;stroke:#111;stroke-width:3.500}
.cur-w{fill:none;stroke:#eee;stroke-width:1.500}
.ax{font:bold 9px "Noto Sans",sans-serif}
.ax-y{stroke:#9cd0c0;stroke-width:1.300}.ax-z{stroke:#2a2a80}.ax-x{fill:none;stroke:#a02040;stroke-width:1.300}
.t-y{fill:#60c050}.t-z{fill:#2c3a9c}.t-x{fill:#a03040}
.persp{font:bold 10px "Noto Sans",sans-serif;fill:#e8e8e8}

.rightcol{flex:none;width:388px;margin-left:4px;display:flex;flex-direction:column;background:#444;border-left:1px solid #383838}
.cb-menu{flex:none;height:47px;display:flex;align-items:flex-end;gap:15px;padding:0 0 5px 12px}
.cb-body{flex:none;height:508px;background:#2b2b2b;margin-left:5px}
.cb-grip{width:152px;margin:4px 0 0 155px}
.lay-tabs{flex:none;height:17px;margin:10px 0 0 6px;display:flex;gap:1px;color:#888}
.lay-tabs span{width:46px;text-align:center;line-height:19px;background:#3c3c3c}
.lay-tabs .active{background:#444;color:#d0d0d0}
.lay-menu{flex:none;height:28px;display:flex;align-items:center;gap:15px;padding-left:15px;border-top:1px solid #3a3a3a}
.lay-tools{flex:none;height:23px;padding-left:363px;display:flex;align-items:center}
.lay-ic{width:16px;height:10px}
.lay-body{flex:none;height:150px;background:#2a2a2a;margin-left:8px;padding:1px 0 0 1px}
.layer{width:350px;height:21px;background:#5087a8;display:flex;align-items:center;padding-left:3px;color:#1c2a33;gap:3px}
.lbtn{width:20px;height:14px;border:1px solid #3b6c88;border-radius:3px;background:#4a7f9f;text-align:center;line-height:12px;color:#14242e}
.swatch{width:15px;height:15px;background:linear-gradient(135deg,#2a2a2a 48%,#d8d8d8 48% 54%,#2a2a2a 54%)}
.lname{margin-left:1px}

.timeline{flex:none;height:30px;display:flex;align-items:center;background:#414141}
.ruler{flex:none;width:1529px;height:30px;background:#2a2a2a;display:flex;padding-left:45px;overflow:hidden}
.tk{flex:none;width:66.49px;display:flex;flex-direction:column;color:#7d7d7d}
.tk span{height:17px;line-height:14px;padding-left:2px}
.tk i{width:1px;height:13px;background:#8f8f8f}
.curframe{flex:none;width:88px;height:21px;margin-left:7px;background:#2a2a2a;line-height:21px;padding-left:7px;border-radius:2px;color:#c8c8c8}
.pb{flex:none;height:14px;width:16px;margin-left:7px}
.first-pb{width:18px;margin-left:9px}
.play{height:18px;margin-left:8px}

.rangebar{flex:none;height:42px;padding:10px 0 5px;display:flex;align-items:center;background:#424242;white-space:nowrap}
.rf{flex:none;height:27px;line-height:27px;background:#2b2b2b;padding-left:6px;border-radius:2px;color:#c8c8c8}
.edge{width:6px;padding:0}
.w88{width:88px}
.strip{flex:none;width:1011px;margin-left:9px;height:27px;background:#393939;padding-left:4px;display:flex;align-items:center}
.slider{width:609px;height:22px;background:#5e5e5e;border-radius:4px;padding:0 3px;display:flex;align-items:center;color:#cfcfcf}
.slider span{margin-left:3px}
.slider .end{margin-left:auto;margin-right:5px}
.handle{width:16px;height:17px;background:#a2a2a2;border-radius:4px}
.rd{width:2px;height:16px;margin-left:4px;background:#8a8a8a;border-radius:1px}
.rd.m9{margin-left:9px}
.ot{width:0;height:0;margin:0 6px 0 14px;border:5px solid transparent;border-top:6px solid #8e8e8e;border-bottom:0}
.set{flex:none;height:27px;line-height:25px;padding-left:4px;border:1px solid #505050;border-radius:2px;color:#cacaca;background:#424242}
.w102{width:102px}.w100{width:100px}
.fps{flex:none;width:103px;height:22px;margin-left:13px;background:#5e5e5e;display:flex;align-items:center;padding-left:3px;color:#cfcfcf}
.fps-a{margin-left:auto;width:20px;height:22px;background:#585858;display:flex;align-items:center;justify-content:center;border-left:1px solid #4e4e4e}
.loop{flex:none;width:16px;height:16px;margin-left:9px}

.cmdline{flex:none;height:30px;display:flex;background:#393939;padding:5px 0 1px}
.cmd-l{flex:none;width:412px;background:#2a2a2a;border-radius:0 2px 2px 0}
.cmd-h{flex:none;width:8px;background:#3f3f3f}
.cmd-r{flex:1 1 auto;background:#2a2a2a}
.status{flex:none;height:23px;background:#434343;color:#bdbdbd;font-size:11px;display:flex;align-items:center;padding:8px 0 0 7px}
.taskstrip{flex:1 1 auto;background:#2d2d2d;position:relative;border-top:1px solid #3a3a3a}
.taskstrip i{position:absolute;left:543px;top:0;bottom:0;width:45px;background:#666}
```
FILE: app.js
```js
// Perspective floor grid of the 3D viewport: 24 x 24 cells on a projected quad.
(function () {
  var q = [[577, 584], [1145, 616], [1199, 903], [120, 767]];
  var g0 = document.getElementById("grid");
  var NS = "http://www.w3.org/2000/svg";
  var x0 = q[0][0], y0 = q[0][1], x1 = q[1][0], y1 = q[1][1], x2 = q[2][0], y2 = q[2][1], x3 = q[3][0], y3 = q[3][1];
  var sx = x0 - x1 + x2 - x3, sy = y0 - y1 + y2 - y3;
  var dx1 = x1 - x2, dx2 = x3 - x2, dy1 = y1 - y2, dy2 = y3 - y2;
  var den = dx1 * dy2 - dx2 * dy1;
  var g = (sx * dy2 - dx2 * sy) / den, h = (dx1 * sy - sx * dy1) / den;
  var a = x1 - x0 + g * x1, b = x3 - x0 + h * x3, d = y1 - y0 + g * y1, e = y3 - y0 + h * y3;
  function pt(u, v) {
    var w = g * u + h * v + 1;
    return [(a * u + b * v + x0) / w, (d * u + e * v + y0) / w];
  }
  function line(p, r, mid) {
    var l = document.createElementNS(NS, "line");
    l.setAttribute("x1", p[0]); l.setAttribute("y1", p[1]);
    l.setAttribute("x2", r[0]); l.setAttribute("y2", r[1]);
    l.setAttribute("class", mid ? "gm" : "gl");
    g0.appendChild(l);
  }
  for (var i = 0; i <= 24; i++) {
    var t = i / 24;
    line(pt(t, 0), pt(t, 1), i === 12);
    line(pt(0, t), pt(1, t), i === 12);
  }
})();
```
